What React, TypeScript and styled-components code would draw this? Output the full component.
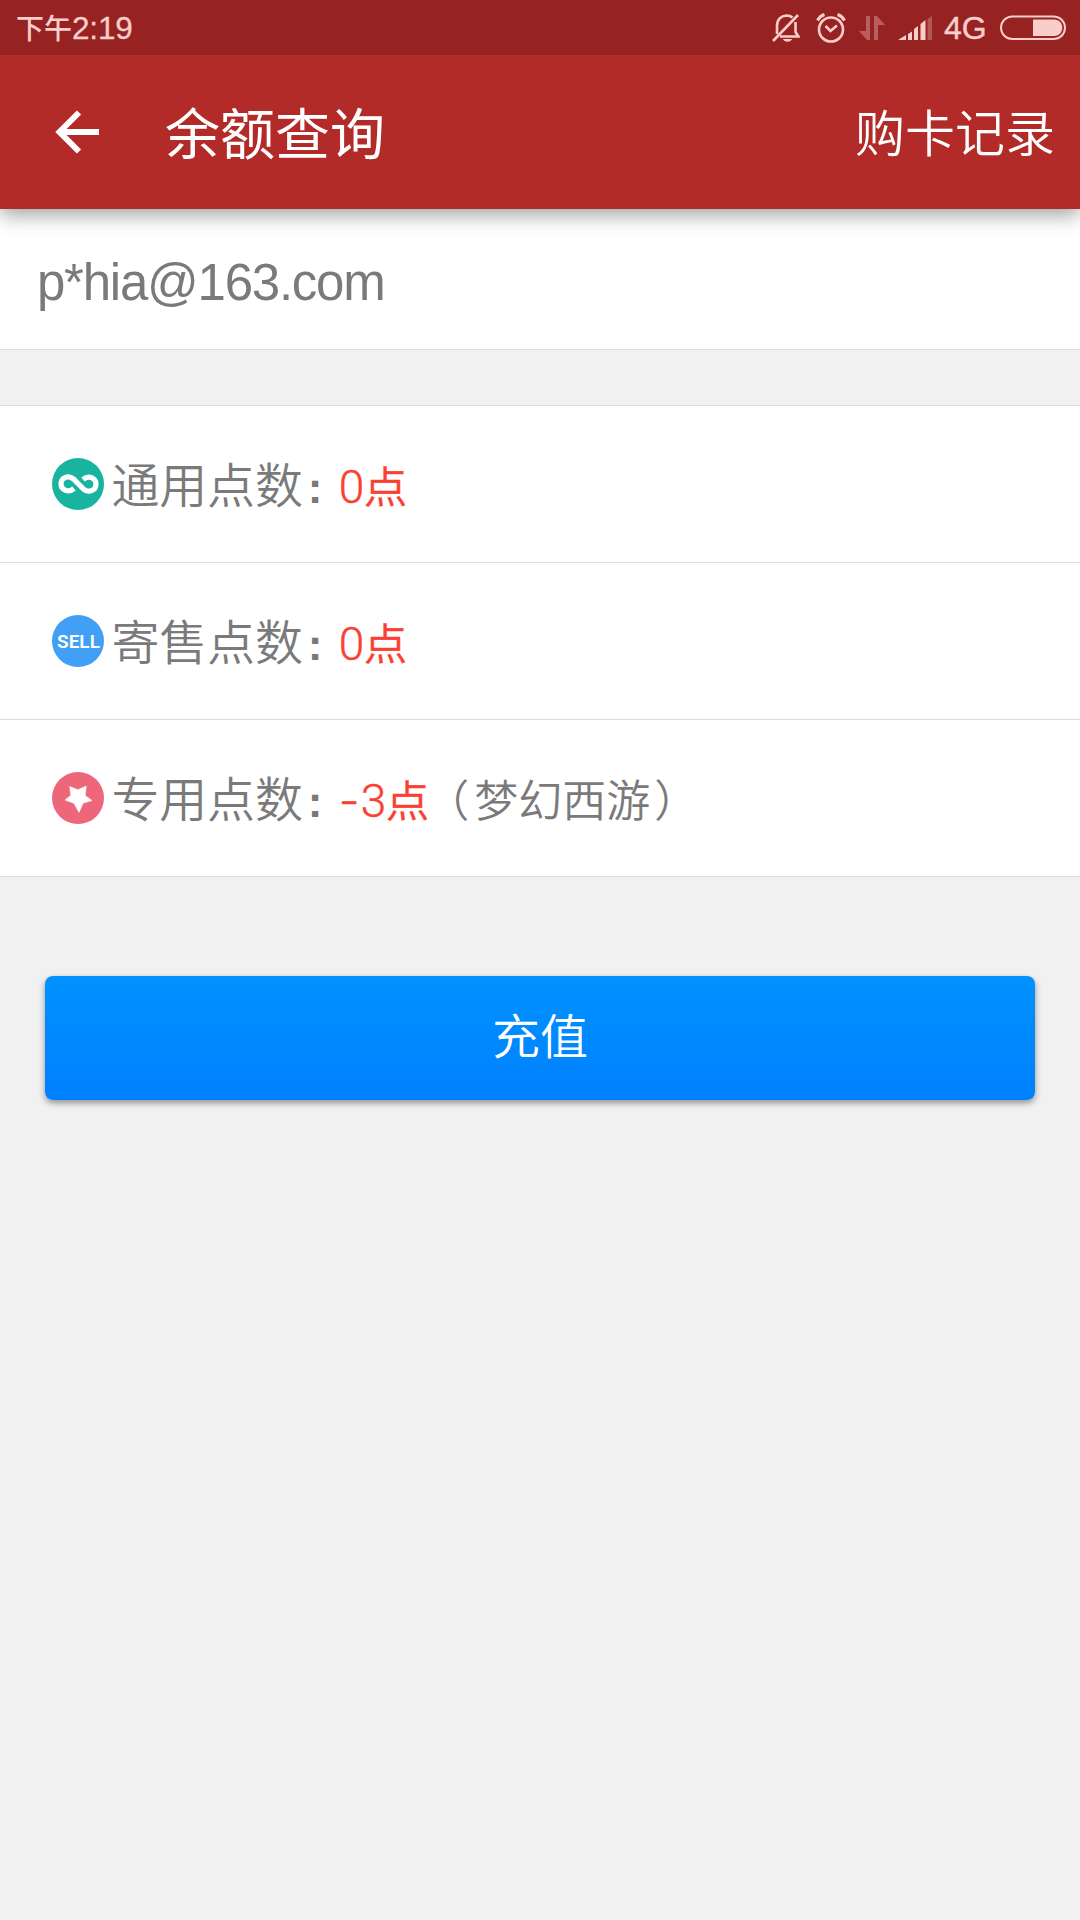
import React from "react";
import styled, { createGlobalStyle } from "styled-components";

const cjk = `"Noto Sans CJK SC", sans-serif`;
const latin = `"Liberation Sans", "Noto Sans CJK SC", sans-serif`;

const GlobalStyle = createGlobalStyle`
  * { box-sizing: border-box; }
  body { margin: 0; background: #f1f1f1; font-family: ${cjk}; }
`;

const Screen = styled.div`
  width: 1080px;
  height: 1920px;
  display: flex;
  flex-direction: column;
  background: #f1f1f1;
  overflow: hidden;
`;

const StatusBar = styled.div`
  height: 55px;
  flex: none;
  display: flex;
  justify-content: space-between;
  padding: 0 14px 0 16px;
  background: #962322;
  color: #f8cdca;
  position: relative;
  z-index: 1;
`;

const Clock = styled.div`
  display: flex;
  align-items: baseline;
  height: 55px;
  line-height: 55px;
`;

const Period = styled.span`
  font: 500 28px/55px ${cjk};
`;

const Time = styled.span`
  font: 31.5px/55px ${latin};
  letter-spacing: -0.2px;
  -webkit-text-stroke: 0.3px currentColor;
`;

const StatusIcons = styled.div`
  display: flex;
  align-items: center;
`;

const Glyph = styled.svg<{ $gap?: number }>`
  display: block;
  flex: none;
  margin-left: ${(p) => p.$gap ?? 0}px;
`;

const Network = styled.span`
  width: 44px;
  margin-left: 12px;
  font: 32px/58px ${latin};
  -webkit-text-stroke: 0.4px currentColor;
`;

const AppBar = styled.header`
  height: 154px;
  flex: none;
  display: flex;
  align-items: center;
  padding: 0 25px 0 55px;
  background: #b32b28;
  color: #fff;
  position: relative;
  box-shadow: 0 5px 20px rgba(0, 0, 0, 0.4);
`;

const Title = styled.h1`
  margin: 0 auto 0 66px;
  padding-bottom: 5px;
  font: 400 55px/80px ${cjk};
`;

const HeaderLink = styled.a`
  padding-bottom: 5px;
  font: 350 50px/80px ${cjk};
`;

const Account = styled.div`
  height: 141px;
  flex: none;
  padding: 0 0 0 37px;
  background: #fff;
  border-bottom: 1px solid #dcdcdc;
  color: #7a7a7a;
  font: 51px/148px ${latin};
  letter-spacing: -1.25px;
`;

const PointList = styled.section`
  margin-top: 55px;
  border-top: 1px solid #dcdcdc;
  background: #fff;
`;

const PointRow = styled.div`
  height: 157px;
  display: flex;
  align-items: center;
  padding-left: 52px;
  border-bottom: 1px solid #dcdcdc;
  color: #7a7a7a;
`;

const Badge = styled.div<{ $color: string }>`
  width: 52px;
  height: 52px;
  flex: none;
  display: flex;
  align-items: center;
  justify-content: center;
  border-radius: 50%;
  background: ${(p) => p.$color};
  color: #fff;
  font: 600 19px/52px Roboto, sans-serif;
`;

const BadgeText = styled.span`
  padding: 1px 0 0 1px;
`;

const RowText = styled.div`
  display: flex;
  align-items: baseline;
  margin-left: 7.5px;
  padding-top: 1px;
  line-height: 80px;
`;

const Label = styled.span`
  font: 350 48px/80px ${cjk};
  letter-spacing: -0.2px;
`;

const Colon = styled.span`
  width: 36px;
  padding-left: 5px;
  font: bold 44px/80px ${latin};
`;

const Value = styled.span<{ $raised: boolean }>`
  display: flex;
  align-items: baseline;
  margin-top: ${(p) => (p.$raised ? -1 : 0)}px;
  color: #fa4032;
  -webkit-text-stroke: 0.4px currentColor;
`;

const Amount = styled.span`
  font: 350 46px/80px Roboto, ${cjk};
`;

const Minus = styled.span`
  width: 22px;
  font: 300 46px/80px Inter, sans-serif;
`;

const Unit = styled.span`
  margin-left: -0.5px;
  font: 350 43.500px/80px ${cjk};
`;

const Game = styled.span`
  font: 350 44px/80px ${cjk};
`;

const OpenParen = styled.span`
  margin: 0 5px 0 -4px;
`;

const CloseParen = styled.span`
  margin-left: 4px;
`;

const RechargeButton = styled.button`
  height: 124px;
  margin: 99px 45px 0;
  padding: 0 0 10px;
  border: 0;
  border-radius: 8px;
  background: linear-gradient(#0092ff, #0080ff);
  box-shadow: 0 3px 6px rgba(0, 0, 0, 0.4);
  color: #fff;
  font: 350 48px/110px ${cjk};
`;

const BellOff = () => (
  <Glyph width="28" height="30" viewBox="0 0 28 30" fill="none" stroke="currentColor" strokeWidth="2.6">
    <path d="M5 21V13C5 6.500 9 3 14.500 2.500C17 2.500 19 3.200 20.500 4.500M23.500 9V19L26.500 23.500H8M5 17V20" />
    <path d="M1 28L26 2" />
    <path d="M11 26H20C19 29.500 12 29.500 11 26Z" fill="currentColor" stroke="none" />
  </Glyph>
);

const Alarm = () => (
  <Glyph $gap={16} width="30" height="30" viewBox="0 0 30 30" fill="none" stroke="currentColor" strokeWidth="2.6">
    <circle cx="15" cy="16.500" r="12" />
    <path d="M1.500 7.500C3 4.500 5.500 2.500 8.500 1.500M28.500 7.500C27 4.500 24.500 2.500 21.500 1.500" strokeWidth="3" />
    <path d="M9.500 13L14.500 18L21 12.500" />
  </Glyph>
);

const DataArrows = () => (
  <Glyph $gap={13} width="26" height="26" viewBox="0 0 26 26" fill="currentColor" opacity="0.35">
    <path d="M7 1H11V25H8L0 16H7Z" />
    <path d="M15 1H18L26 10H19V25H15Z" />
  </Glyph>
);

const Signal = () => (
  <Glyph $gap={13} width="34" height="26" viewBox="0 0 34 26" fill="currentColor">
    <path d="M0 25L8 20V25ZM10 19L14 16.500V25H10ZM16 14L20 11V25H16ZM22.500 9L27.500 5V25H22.500Z" />
    <path d="M29.500 4L34 1V25H29.500Z" opacity="0.3" />
  </Glyph>
);

const Battery = () => (
  <Glyph $gap={12} width="66" height="26" viewBox="0 0 66 26">
    <rect x="1" y="1.500" width="64" height="22.500" rx="11.250" fill="none" stroke="currentColor" strokeWidth="2" />
    <path d="M33 4.500H54C65 4.500 65 21 54 21H33Z" fill="currentColor" />
  </Glyph>
);

const BackArrow = () => (
  <Glyph width="44" height="44" viewBox="0 0 44 44" fill="none" stroke="#fff" strokeWidth="6">
    <path d="M24 2.500L4.500 22L24 41.500M4.500 22H44" />
  </Glyph>
);

const Infinity = () => (
  <Glyph width="41" height="22" viewBox="-0.500 -1 41 22" fill="none" stroke="#fff" strokeWidth="5.200">
    <path d="M15.500 14.500C10 19.500 2.500 16 2.500 10C2.500 3.500 10 0.500 15 5L25 15C30 19.500 37.500 16.500 37.500 10C37.500 4 30 0.500 24.500 5.500" />
  </Glyph>
);

const Star = () => (
  <Glyph width="29" height="29" viewBox="0 0 28 28" fill="#fff" stroke="#fff" strokeWidth="0.500">
    <path d="M5.500 2.500L13.500 5.500L21.500 2L20.500 11L27 16L18.500 18.500L14.500 27.500L9.500 18.500L1 15.500L6.500 11Z" />
  </Glyph>
);

const points = [
  { label: "通用点数", negative: false, amount: "0", game: "", color: "#18b4a0", mark: <Infinity /> },
  { label: "寄售点数", negative: false, amount: "0", game: "", color: "#419ff6", mark: <BadgeText>SELL</BadgeText> },
  { label: "专用点数", negative: true, amount: "3", game: "梦幻西游", color: "#ed6679", mark: <Star /> },
];

export default function App() {
  return (
    <Screen>
      <GlobalStyle />
      <StatusBar>
        <Clock>
          <Period>下午</Period>
          <Time>2:19</Time>
        </Clock>
        <StatusIcons>
          <BellOff />
          <Alarm />
          <DataArrows />
          <Signal />
          <Network>4G</Network>
          <Battery />
        </StatusIcons>
      </StatusBar>
      <AppBar>
        <BackArrow />
        <Title>余额查询</Title>
        <HeaderLink>购卡记录</HeaderLink>
      </AppBar>
      <Account>p*hia@163.com</Account>
      <PointList>
        {points.map((p) => (
          <PointRow key={p.label}>
            <Badge $color={p.color}>{p.mark}</Badge>
            <RowText>
              <Label>{p.label}</Label>
              <Colon>:</Colon>
              <Value $raised={!p.negative}>
                {p.negative && <Minus>-</Minus>}
                <Amount>{p.amount}</Amount>
                <Unit>点</Unit>
              </Value>
              {p.game && (
                <Game>
                  <OpenParen>（</OpenParen>
                  {p.game}
                  <CloseParen>）</CloseParen>
                </Game>
              )}
            </RowText>
          </PointRow>
        ))}
      </PointList>
      <RechargeButton>充值</RechargeButton>
    </Screen>
  );
}
